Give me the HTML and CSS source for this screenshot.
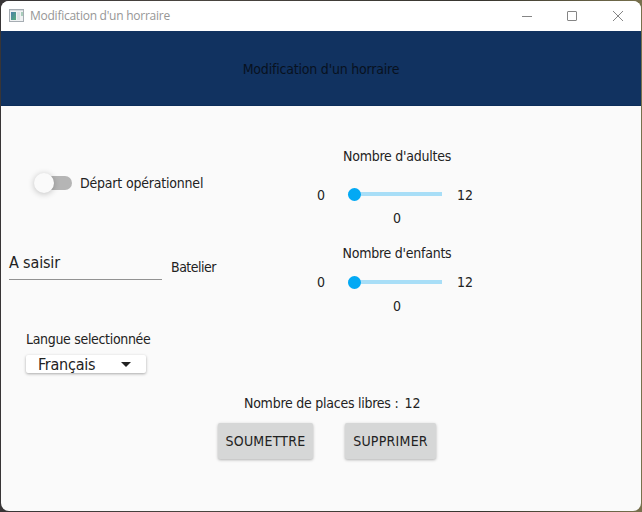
FILE: index.html
```html
<!DOCTYPE html>
<html lang="fr">
<head>
<meta charset="utf-8">
<title>Modification d'un horraire</title>
<link rel="stylesheet" href="styles.css">
</head>
<body>
<div class="window">
  <div class="titlebar">
    <svg class="app-icon" width="16" height="14" viewBox="0 0 16 14">
      <defs><linearGradient id="g" x1="0" y1="0" x2="1" y2="1"><stop offset="0" stop-color="#4a7fa8"/><stop offset="1" stop-color="#58ad7c"/></linearGradient></defs>
      <path fill="#a6adb3" d="M0 0h15v13H0z"/><path fill="#f0f2f3" d="M1 2h13v10H1z"/>
      <path fill="#d5dade" d="M1 1h13v1H1z"/><path fill="url(#g)" d="M2 3h5v8H2z"/>
      <path fill="#dde3e5" d="M8 3h3v8H8z"/><path fill="#a9cdbb" d="M12 3h2v4h-2z"/>
    </svg>
    <span class="caption">Modification d'un horraire</span>
    <svg class="controls" width="104" height="12" viewBox="0 0 104 12" fill="none" stroke="#858585">
      <path d="M1 6.5h10"/><rect x="46.5" y="1.5" width="9" height="9" rx=".5"/><path d="M92 1l10 10M102 1L92 11"/>
    </svg>
  </div>
  <header class="banner"><span class="t-banner">Modification d'un horraire</span></header>
  <main>
    <div class="columns">
      <section class="left">
        <div class="toggle-row"><span class="toggle"><i class="thumb"></i></span><span class="t-depart">Départ opérationnel</span></div>
        <div class="input-row"><div class="field"><span class="t-saisir">A saisir</span></div><span class="t-batelier">Batelier</span></div>
        <div class="language"><span class="t-langue">Langue selectionnée</span>
          <div class="combo"><span class="t-francais">Français</span><svg width="10" height="5" viewBox="0 0 10 5"><path fill="#222" d="M0 0h10L5 5z"/></svg></div>
        </div>
      </section>
      <section class="right">
        <div class="counter">
          <span class="t-adultes">Nombre d'adultes</span>
          <div class="slider-row"><span class="min">0</span><div class="slider"><i class="knob"></i></div><span class="max">12</span></div>
          <span class="value">0</span>
        </div>
        <div class="counter second">
          <span class="t-enfants">Nombre d'enfants</span>
          <div class="slider-row"><span class="min">0</span><div class="slider"><i class="knob"></i></div><span class="max">12</span></div>
          <span class="value">0</span>
        </div>
      </section>
    </div>
    <div class="places"><span class="t-places">Nombre de places libres :</span><span class="t-total">12</span></div>
    <div class="actions"><button class="submit">SOUMETTRE</button><button class="delete">SUPPRIMER</button></div>
  </main>
</div>
</body>
</html>
```
FILE: styles.css
```css
* { box-sizing: border-box; }
body {
  margin: 0;
  height: 512px;
  padding: 1px;
  overflow: hidden;
  background: linear-gradient(90deg, #383536, #4a4540 30%, #37352f 75%, #77704c);
  color: #222;
  font: 14px/20px "DejaVu Sans Condensed", "DejaVu Sans", sans-serif;
  font-stretch: condensed;
  white-space: nowrap;
}
.window { width: 640px; height: 510px; background: #fafafa; border-radius: 8px; overflow: hidden; }
.titlebar { height: 30px; background: #fff; display: flex; align-items: center; padding: 0 16px 0 8px; }
.caption { margin-left: 5px; font: 12px/16px "Open Sans", sans-serif; color: #969696; letter-spacing: -.25px; }
.controls { margin-left: auto; }
.banner { height: 75px; background: #113260; border-bottom: 1px solid #0c2d5a; display: flex; justify-content: center; padding-top: 28px; color: #08111e; }
.t-banner, .t-depart { letter-spacing: -.2px; }
.t-adultes, .t-enfants, .t-places { letter-spacing: -.25px; }
.t-langue { letter-spacing: -.32px; }
.columns { display: flex; height: 285px; }
.left { width: 300px; }
.right { width: 192px; padding-top: 40px; }
.toggle-row { display: flex; align-items: center; padding: 67px 0 0 33px; }
.toggle { width: 38px; height: 14px; border-radius: 7px; background: linear-gradient(90deg, transparent 10px, #b5b5b5 10px); display: flex; align-items: center; margin-right: 8px; }
.thumb { width: 20px; height: 20px; border-radius: 50%; background: #fafafa; box-shadow: 0 1px 6px rgba(0,0,0,.24); }
.input-row { display: flex; padding: 59px 0 0 8px; }
.field { width: 153px; height: 28px; padding-top: 1px; border-bottom: 1px solid #929292; margin-right: 9px; font-size: 16px; letter-spacing: -.15px; }
.t-batelier { padding-top: 5px; letter-spacing: -.5px; }
.language { display: flex; flex-direction: column; align-items: flex-start; padding: 49px 0 0 25px; }
.combo { width: 120px; height: 18px; margin-top: 6px; padding: 0 15px 0 12px; border-radius: 2px; background: #fff; box-shadow: 0 1px 3px rgba(0,0,0,.33); display: flex; align-items: center; justify-content: space-between; font-size: 16px; line-height: 18px; }
.t-francais { padding-top: 2px; letter-spacing: -.25px; }
.counter { display: flex; flex-direction: column; align-items: center; height: 97px; }
.slider-row { display: flex; align-items: center; align-self: stretch; height: 20px; margin: 19px 0 3px; }
.min { margin-left: 16px; width: 9px; }
.slider { width: 94px; height: 4px; margin: -2px 15px 0 22px; background: #a8def7; display: flex; align-items: center; }
.knob { width: 13px; height: 13px; border-radius: 50%; background: #03a9f4; }
.value { height: 20px; }
.second .slider-row { margin: 9px 0 4px; }
.second .slider { margin-top: 0; }
.places { display: flex; gap: 6px; padding: 2px 0 0 243px; }
.actions { display: flex; gap: 32px; padding: 10px 0 0 217px; }
button { height: 36px; padding: 0; border: 0; border-radius: 2px; background: #d6d7d7; box-shadow: 0 1px 3px rgba(0,0,0,.3); color: #222; font: inherit; letter-spacing: .25px; }
.submit { width: 95px; }
.delete { width: 91px; }
```
